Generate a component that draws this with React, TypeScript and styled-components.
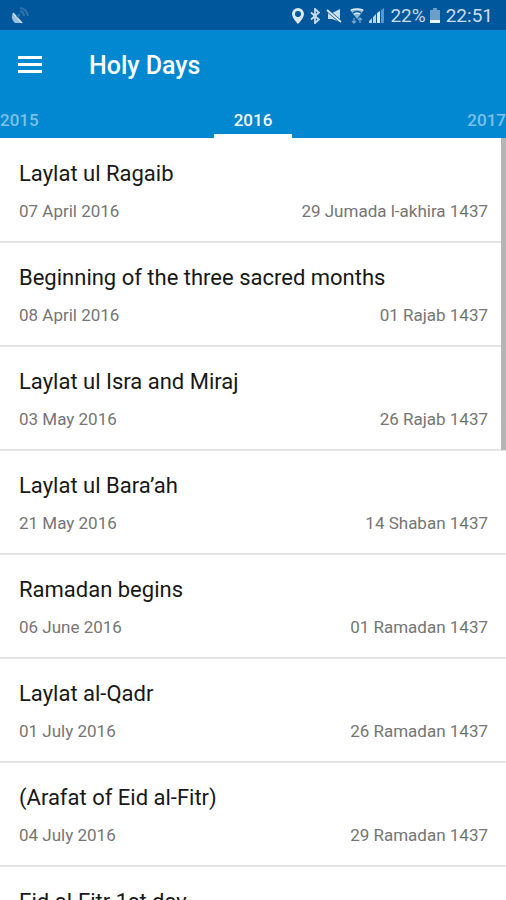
import React, { useState } from "react";
import styled, { createGlobalStyle } from "styled-components";

const GlobalStyle = createGlobalStyle`
  * { box-sizing: border-box; }
  body { margin: 0; background: #fff; font-family: Roboto, "Liberation Sans", sans-serif; }
`;

const Screen = styled.div`
  height: 100vh;
  display: flex;
  flex-direction: column;
  overflow: hidden;
`;

const StatusBar = styled.div`
  flex: none;
  height: 30px;
  padding: 2px 13px 0 11px;
  display: flex;
  align-items: center;
  justify-content: space-between;
  background: #01579b;
  color: #c9dded;
  font-size: 19px;
  line-height: 28px;
`;

const StatusGroup = styled.div`
  display: flex;
  align-items: center;
`;

const StatusIcon = styled.svg<{ $gap: number }>`
  display: block;
  flex: none;
  margin-right: ${(p) => p.$gap}px;
`;

const Battery = styled.span`
  margin-right: 4px;
`;

const Header = styled.header`
  flex: none;
  background: #0288d1;
  color: #fff;
`;

const AppBar = styled.div`
  height: 72px;
  padding: 0 16px;
  display: flex;
  align-items: center;
  gap: 45px;
`;

const MenuButton = styled.button`
  padding: 0 1px;
  border: 0;
  background: none;
  color: inherit;
  cursor: pointer;
  svg { display: block; }
`;

const Title = styled.h1`
  margin: 0;
  font-size: 25px;
  line-height: 32px;
  font-weight: 500;
`;

const Tabs = styled.div`
  height: 36px;
  display: flex;
  justify-content: space-between;
`;

const Tab = styled.button<{ $active: boolean; $edge: boolean }>`
  padding: 4px ${(p) => (p.$edge ? 0 : 20)}px 0;
  border: 0;
  border-bottom: 4px solid ${(p) => (p.$active ? "#fff" : "transparent")};
  background: none;
  color: ${(p) => (p.$active ? "#f4faff" : "#7cc1e6")};
  font: 500 17px/28px Roboto, "Liberation Sans", sans-serif;
  cursor: pointer;
`;

const ListArea = styled.main`
  position: relative;
  flex: 1;
  min-height: 0;
  overflow: hidden;
`;

const List = styled.ul`
  margin: 0;
  padding: 1px 0 0;
  list-style: none;
`;

const ScrollThumb = styled.div`
  position: absolute;
  top: 0;
  right: 0;
  width: 5px;
  height: 41%;
  background: #b5b5b5;
`;

const Row = styled.li`
  height: 104px;
  padding: 18px 18px 0 19px;
  border-bottom: 2px solid #e4e4e4;
`;

const Name = styled.h2`
  margin: 0;
  color: #181818;
  font-size: 22px;
  line-height: 34px;
  font-weight: 400;
`;

const Dates = styled.div`
  margin-top: 7px;
  display: flex;
  justify-content: space-between;
  color: #757575;
  font-size: 17px;
  line-height: 26px;
`;

const days = [
  ["Laylat ul Ragaib", "07 April 2016", "29 Jumada l-akhira 1437"],
  ["Beginning of the three sacred months", "08 April 2016", "01 Rajab 1437"],
  ["Laylat ul Isra and Miraj", "03 May 2016", "26 Rajab 1437"],
  ["Laylat ul Bara’ah", "21 May 2016", "14 Shaban 1437"],
  ["Ramadan begins", "06 June 2016", "01 Ramadan 1437"],
  ["Laylat al-Qadr", "01 July 2016", "26 Ramadan 1437"],
  ["(Arafat of Eid al-Fitr)", "04 July 2016", "29 Ramadan 1437"],
  ["Eid al-Fitr 1st day", "05 July 2016", "01 Shawwal 1437"],
];

const years = ["2015", "2016", "2017"];

export default function App() {
  const [year, setYear] = useState("2016");
  return (
    <Screen>
      <GlobalStyle />
      <StatusBar>
        <StatusIcon $gap={0} width="18" height="18" viewBox="0 0 18 18" aria-label="GPS">
          <path d="M2 6 Q-1 12 4 16 L11 16 Z" fill="#9fc0da" />
          <path d="M2 6 L11 16" stroke="#c9dded" strokeWidth="1.5" />
          <path d="M6 10 L9 7 M9 4 Q13 5 13 9 M9 1 Q16 2 17 9" fill="none" stroke="#2f74a9" strokeWidth="2" />
        </StatusIcon>
        <StatusGroup>
          <StatusIcon $gap={6} width="12" height="16" viewBox="0 0 12 16" aria-label="Location">
            <path d="M6 0a6 6 0 0 0-6 6c0 4 6 10 6 10s6-6 6-10a6 6 0 0 0-6-6z M6 3a3 3 0 1 1 0 6a3 3 0 0 1 0-6z" fill="#dce9f3" fillRule="evenodd" />
          </StatusIcon>
          <StatusIcon $gap={6} width="10" height="16" viewBox="0 0 10 16" aria-label="Bluetooth">
            <path d="M1 4.5 L9 11.5 L5 15 V1 L9 4.5 L1 11.5" fill="none" stroke="#c9dded" strokeWidth="1.8" />
          </StatusIcon>
          <StatusIcon $gap={8} width="16" height="16" viewBox="0 0 16 16" aria-label="Muted">
            <path d="M2 5 H6 L14 1 V14 L6 11 H2 Z" fill="#c9dded" />
            <path d="M1 2 L15 14" stroke="#01579b" strokeWidth="3" />
            <path d="M1 2 L15 14" stroke="#dce9f3" strokeWidth="1.8" />
          </StatusIcon>
          <StatusIcon $gap={5} width="14" height="16" viewBox="0 0 14 16" aria-label="Wi-Fi">
            <path d="M0 2 Q7 -1 14 2 L7 11 Z" fill="#8db6d5" />
            <path d="M1 2 Q7 0 13 2 M4 6 Q7 4 10 6" fill="none" stroke="#dce9f3" strokeWidth="1.5" />
            <path d="M3 5 Q7 2 11 5" fill="none" stroke="#01579b" strokeWidth="1.5" />
            <path d="M4 10 V15 M2 13 L4 15 L6 13 M10 15 V10 M8 12 L10 10 L12 12" fill="none" stroke="#79a8cc" strokeWidth="1.3" />
          </StatusIcon>
          <StatusIcon $gap={6} width="15" height="16" viewBox="0 0 15 16" aria-label="Signal">
            <path d="M0 15 V13 L3 10 V15 Z M4 15 V9 L7 6 V15 Z" fill="#b9d2e6" />
            <path d="M8 15 V5 L11 3 V15 Z" fill="#dce9f3" />
            <path d="M12 15 V2 L15 0 V15 Z" fill="#5e97c3" />
          </StatusIcon>
          <Battery>22%</Battery>
          <StatusIcon $gap={6} width="10" height="16" viewBox="0 0 10 16" aria-label="Battery">
            <path d="M3 0 H7 V2 H10 V12 H0 V2 H3 Z" fill="#6c9fc6" />
            <path d="M0 12 H10 V15 H0 Z" fill="#edf4f9" />
          </StatusIcon>
          <span>22:51</span>
        </StatusGroup>
      </StatusBar>
      <Header>
        <AppBar>
          <MenuButton aria-label="Menu">
            <svg width="26" height="20" viewBox="0 0 26 20">
              <path d="M1 1.5 H25 M1 8.5 H25 M1 15.5 H25" stroke="currentColor" strokeWidth="3" />
            </svg>
          </MenuButton>
          <Title>Holy Days</Title>
        </AppBar>
        <Tabs role="tablist">
          {years.map((y, i) => (
            <Tab
              key={y}
              role="tab"
              aria-selected={y === year}
              $active={y === year}
              $edge={i !== 1}
              onClick={() => setYear(y)}
            >
              {y}
            </Tab>
          ))}
        </Tabs>
      </Header>
      <ListArea>
        <List>
          {days.map(([name, date, hijri]) => (
            <Row key={name}>
              <Name>{name}</Name>
              <Dates>
                <span>{date}</span>
                <span>{hijri}</span>
              </Dates>
            </Row>
          ))}
        </List>
        <ScrollThumb />
      </ListArea>
    </Screen>
  );
}
